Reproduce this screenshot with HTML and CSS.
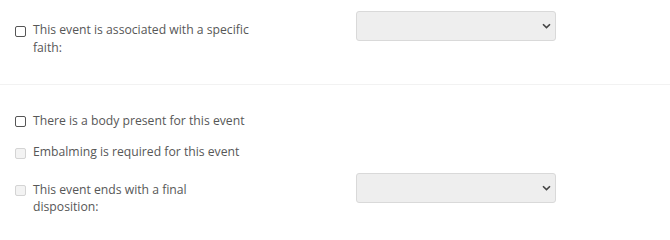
FILE: index.html
```html
<!DOCTYPE html>
<html>
<head>
<meta charset="utf-8">
<link rel="stylesheet" href="styles.css">
</head>
<body>
<div class="section first">
  <div class="row">
    <label class="check tall">
      <input type="checkbox" class="box">
      <span class="text">This event is associated with a specific faith:</span>
    </label>
    <div class="select"><svg class="chev" width="9" height="6" viewBox="0 0 9 6"><path d="M1 1.2 L4.5 4.6 L8 1.2" fill="none" stroke="#444" stroke-width="1.6"/></svg></div>
  </div>
</div>
<div class="section second">
  <label class="check r1">
    <input type="checkbox" class="box">
    <span class="text">There is a body present for this event</span>
  </label>
  <label class="check r2 disabled">
    <input type="checkbox" class="box" disabled>
    <span class="text">Embalming is required for this event</span>
  </label>
  <div class="row r3">
    <label class="check tall2 disabled">
      <input type="checkbox" class="box" disabled>
      <span class="text">This event ends with a final disposition:</span>
    </label>
    <div class="select"><svg class="chev" width="9" height="6" viewBox="0 0 9 6"><path d="M1 1.2 L4.5 4.6 L8 1.2" fill="none" stroke="#444" stroke-width="1.6"/></svg></div>
  </div>
</div>
</body>
</html>
```
FILE: styles.css
```css
html, body {
  margin: 0;
  padding: 0;
  background: #fff;
}
body {
  font-family: "Open Sans", "Liberation Sans", sans-serif;
  font-size: 12.2px;
  line-height: 17.5px;
  color: #575757;
}
.section.first {
  height: 85px;
  box-sizing: border-box;
  padding-top: 11px;
  border-bottom: 1px solid #f2f2f2;
}
.row {
  display: flex;
  align-items: flex-start;
}
.check {
  display: flex;
  align-items: flex-start;
  margin-left: 15px;
}
.row .check {
  width: 341px;
}
.check .text {
  width: 219px;
}
.tall {
  margin-top: 10px;
}
.box {
  -webkit-appearance: none;
  appearance: none;
  width: 11px;
  height: 11px;
  margin: 4.5px 7px 0 0;
  border: 1.2px solid #555;
  border-radius: 2px;
  background: #fff;
  box-sizing: border-box;
  flex: none;
}
.disabled .box {
  border-color: #d4d4d4;
  background: #f3f3f3;
}
.select {
  width: 200px;
  height: 30px;
  box-sizing: border-box;
  background: #eeeeee;
  border: 1px solid #d9d9d9;
  border-radius: 3px;
  display: flex;
  align-items: center;
  justify-content: flex-end;
  padding-right: 4px;
}
.chev {
  display: block;
}
.second {
  padding-top: 26.5px;
}
.r2 {
  margin-top: 14px;
}
.r3 {
  margin-top: 12.5px;
}
.tall2 {
  margin-top: 7.5px;
}
```
